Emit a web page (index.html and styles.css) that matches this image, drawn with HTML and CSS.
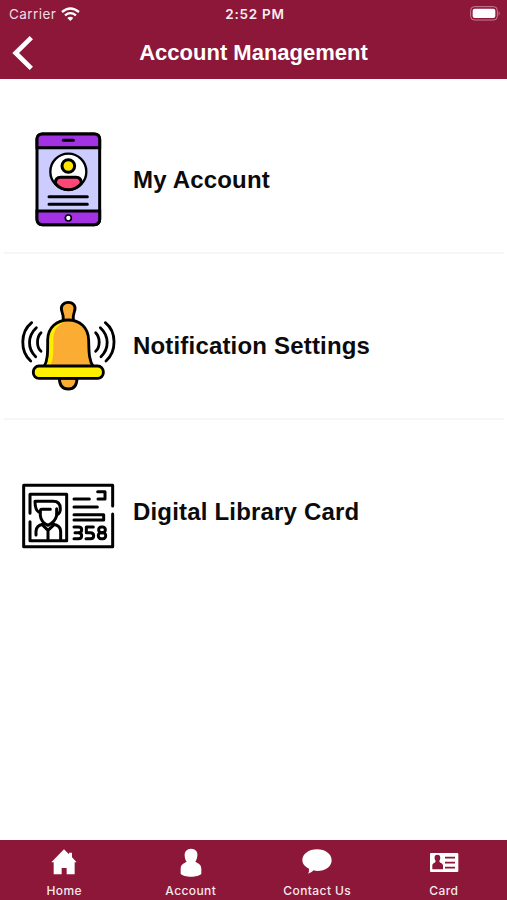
FILE: index.html
```html
<!DOCTYPE html>
<html lang="en">
<head>
    <meta charset="UTF-8">
    <meta name="viewport" content="width=device-width, initial-scale=1.0">
    <title>Account Management</title>
    <link rel="stylesheet" href="styles.css">
</head>
<body>

<header class="header">
    <div class="status-bar">
        <div class="carrier">
            <span>Carrier</span>
            <svg width="19" height="14" viewBox="0 0 57 42" fill="none" stroke="#fff" stroke-width="7">
                <path d="M3 15 Q28 -6 54 15"/>
                <path d="M12 25 Q28 12 45 25"/>
                <path d="M28 42 L19 33 Q28 25 37 33 Z" fill="#fff" stroke="none"/>
            </svg>
        </div>
        <span class="time">2:52 PM</span>
        <div class="battery">
            <svg width="31" height="15" viewBox="0 0 93 45">
                <rect x="2" y="2" width="80" height="40" rx="11" fill="none" stroke="#c58097" stroke-width="3"/>
                <rect x="8" y="8" width="68" height="28" rx="6" fill="#fff"/>
                <path d="M86 16 Q92 22 86 29 Z" fill="#c58097"/>
            </svg>
        </div>
    </div>
    <div class="title-bar">
        <button class="back" aria-label="Back">
            <svg width="22" height="36" viewBox="0 0 66 108" fill="none" stroke="#fff" stroke-width="14">
                <path d="M58 8 L11 54 L58 100"/>
            </svg>
        </button>
        <h1>Account Management</h1>
    </div>
</header>

<main class="menu">
    <a class="menu-item" href="#">
        <!-- phone -->
        <svg class="menu-icon" viewBox="0 12 330 330" stroke="#000" stroke-width="9" stroke-linecap="round">
            <rect x="66" y="42" width="188" height="272" rx="16" fill="#ccccff"/>
            <path d="M66 83 V58 Q66 42 82 42 H238 Q254 42 254 58 V83 Z" fill="#a232e2"/>
            <path d="M66 273 H254 V298 Q254 314 238 314 H82 Q66 314 66 298 Z" fill="#a232e2"/>
            <path d="M145 61 H175"/>
            <circle cx="160" cy="155" r="54" fill="#fff" stroke-width="7"/>
            <path d="M121 190 Q121 172 137 172 H183 Q199 172 199 190 Q184 209 160 209 Q136 209 121 190 Z" fill="#ff4777"/>
            <circle cx="160" cy="138" r="19" fill="#ffe600"/>
            <path d="M102 230 H217 M102 253 H217"/>
            <circle cx="160" cy="294" r="9" fill="#fff" stroke-width="5"/>
        </svg>
        <span>My Account</span>
    </a>
    <a class="menu-item" href="#">
        <!-- bell -->
        <svg class="menu-icon" viewBox="0 0 330 330" fill="none" stroke="#000" stroke-width="8.5" stroke-linecap="round" stroke-linejoin="round">
            <path d="M133 264 H186 Q186 297 160 297 Q133 297 133 264 Z" fill="#fbad33"/>
            <path d="M145 93 Q146 78 141 65 C134 48 146 37 160 37 C174 37 185 48 178 65 Q173 78 175 93 Z" fill="#fbad33"/>
            <path d="M87 230 C99 210 98 184 98 150 C98 112 126 90 160 90 C194 90 220 112 221 150 C222 184 221 210 235 230 Z" fill="#fbad33" stroke="none"/>
            <path d="M92 228 C102 210 102 184 102 150 C102 112 127 94 153 94 C130 104 115 118 115 150 C115 188 116 209 105 228 Z" fill="#ffed00" stroke="none"/>
            <path d="M87 230 C99 210 98 184 98 150 C98 112 126 90 160 90 C194 90 220 112 221 150 C222 184 221 210 235 230"/>
            <rect x="55" y="228" width="210" height="37" rx="17" fill="#fff000"/>
            <path d="M50 98 C15 126 15 185 47 213 M64 113 C37 138 37 176 62 200 M78 128 C64 142 64 171 78 184"/>
            <path d="M271 98 C306 126 305 185 273 213 M256 113 C283 138 283 176 258 200 M242 128 C256 142 256 171 242 184"/>
        </svg>
        <span>Notification Settings</span>
    </a>
    <a class="menu-item" href="#">
        <!-- library card -->
        <svg class="menu-icon" viewBox="0 -57 330 330" fill="none" stroke="#000" stroke-width="9" stroke-linecap="round" stroke-linejoin="round">
            <path d="M293 93 V31 H26 V215 H293 V117"/>
            <path d="M45 115 V58 H155 V197 H45 V140"/>
            <path d="M71 111 Q60 105 60 79 H114 Q136 79 136 101 Q136 115 126 119"/>
            <path d="M106 103 H80 Q76 103 76 109 V122 Q78 142 99 151 Q120 142 125 122 V101"/>
            <path d="M63 180 V169 Q64 151 84 148 M115 148 Q136 151 137 169 V194"/>
            <path d="M84 146 V151 L99 166 L115 151 V146 M99 166 V194"/>
            <path d="M177 72 H223 M177 96 H247 M248 50 H270 V72 H249"/>
            <path d="M177 119 H266 V135 H177"/>
            <path d="M177 156 H190 Q200 156 200 164 Q200 173 190 173 H180 M190 173 Q200 174 200 182 Q200 191 190 191 H177"/>
            <path d="M235 156 H214 V173 H226 Q236 173 236 182 Q236 191 226 191 H213"/>
            <rect x="251" y="156" width="20" height="17" rx="8"/>
            <rect x="250" y="173" width="22" height="18" rx="8"/>
        </svg>
        <span>Digital Library Card</span>
    </a>
</main>

<nav class="tab-bar">
    <a class="tab" href="#">
        <svg width="30" height="30" viewBox="0 0 90 90" fill="#fff">
            <path d="M45 4 L60 19 V14 H69 V28 L83 43 H77 V79 H53 V60 H38 V79 H14 V43 H7 Z"/>
        </svg>
        <span>Home</span>
    </a>
    <a class="tab" href="#">
        <svg width="30" height="30" viewBox="0 0 90 90" fill="#fff">
            <path d="M45 2 C58 2 66 11 64 24 C63 33 60 38 58 41 C66 46 76 48 76 63 V77 C67 89 23 89 14 77 V63 C14 48 24 46 32 41 C29 38 27 33 26 24 C25 11 33 2 45 2 Z"/>
        </svg>
        <span>Account</span>
    </a>
    <a class="tab" href="#">
        <svg width="30" height="30" viewBox="0 0 90 90" fill="#fff">
            <path d="M45 4 C70 4 89 18 89 37 C89 56 70 69 46 69 Q40 69 35 67 Q28 75 18 77 Q22 71 21 62 C8 56 1 48 1 37 C1 18 20 4 45 4 Z"/>
        </svg>
        <span>Contact Us</span>
    </a>
    <a class="tab" href="#">
        <svg width="30" height="30" viewBox="0 0 90 90">
            <rect x="3" y="15" width="85" height="57" rx="3" fill="#fff"/>
            <path d="M25 20 C35 20 36 31 31 39 C31 45 42 45 42 53 V64 H10 V53 C10 45 20 45 20 39 C15 31 15 20 25 20 Z" fill="#8c1738"/>
            <path d="M48 29 H78 M48 44 H78 M48 59 H78" stroke="#8c1738" stroke-width="5"/>
        </svg>
        <span>Card</span>
    </a>
</nav>

</body>
</html>
```

FILE: styles.css
```css
* {
    box-sizing: border-box;
}

body {
    margin: 0;
    height: 100vh;
    display: flex;
    flex-direction: column;
    background: #fff;
    font-family: "Liberation Sans", Arial, sans-serif;
}

a {
    color: inherit;
    text-decoration: none;
}

svg {
    display: block;
}

.header {
    height: 79px;
    background: #8c1738;
    color: #fff;
}

/* Carrier, time and battery */
.status-bar {
    height: 27px;
    padding: 0 6px 0 9px;
    display: grid;
    grid-template-columns: 1fr auto 1fr;
    align-items: center;
    font-family: Inter, sans-serif;
    font-size: 13.5px;
}

.carrier {
    display: flex;
    align-items: center;
    gap: 5px;
    color: #f0dce2;
    letter-spacing: 0.45px;
}

.time {
    font-weight: 600;
    font-size: 13.5px;
    letter-spacing: 0.75px;
    color: #f8edf0;
}

.battery {
    display: flex;
    justify-content: flex-end;
}

.title-bar {
    height: 51px;
    display: grid;
    grid-template-columns: 60px 1fr 60px;
    align-items: center;
}

.back {
    margin: 0;
    padding: 0 0 0 12px;
    border: none;
    background: none;
}

.title-bar h1 {
    margin: 0;
    text-align: center;
    font-size: 22px;
    white-space: nowrap;
}

/* Main list */
.menu {
    flex: 1;
    padding: 9px 3px 0 4px;
}

.menu-item {
    height: 166px;
    padding: 36px 0 0 11px;
    display: flex;
    align-items: flex-start;
    gap: 8px;
    border-bottom: 2px solid #f6f6f6;
    color: #0b0b0b;
    font-size: 24px;
    font-weight: bold;
    letter-spacing: 0.18px;
}

.menu-item:last-child {
    border-bottom: none;
}

.menu-item span {
    line-height: 111px;
}

.menu-icon {
    width: 110px;
    height: 110px;
}

/* Bottom navigation */
.tab-bar {
    height: 60px;
    padding-left: 1px;
    display: grid;
    grid-template-columns: repeat(4, 1fr);
    background: #8c1738;
    color: #f8e8ed;
    font-family: Inter, sans-serif;
    font-size: 12px;
    font-weight: 500;
    letter-spacing: 0.4px;
}

.tab {
    padding-top: 8px;
    display: flex;
    flex-direction: column;
    align-items: center;
    gap: 5px;
}

.tab span {
    line-height: 16px;
}
```
